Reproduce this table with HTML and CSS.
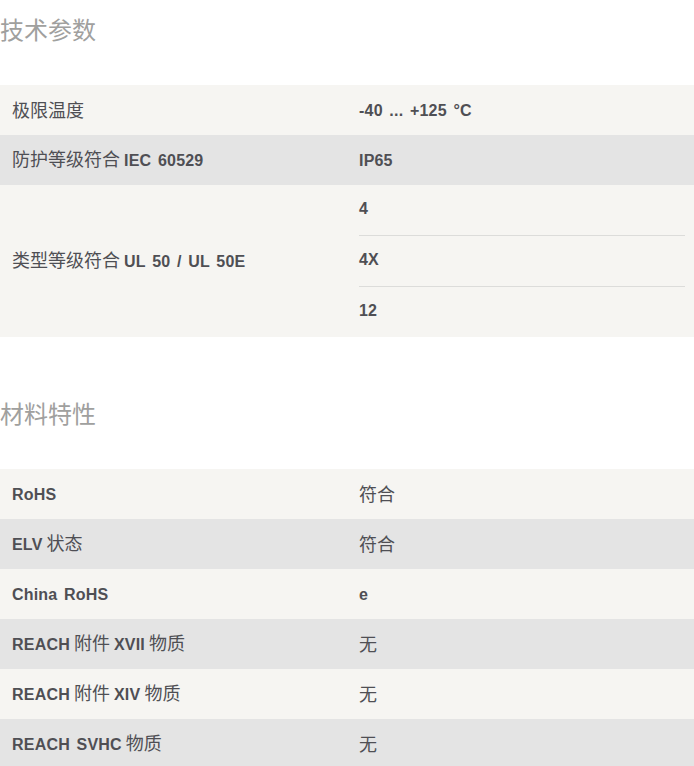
FILE: index.html
```html
<!DOCTYPE html>
<html lang="zh-CN">
<head>
<meta charset="utf-8">
<title>技术参数</title>
<link rel="stylesheet" href="styles.css">
</head>
<body>
<section class="section">
  <h2 class="section-title">技术参数</h2>
  <div class="spec-table">
    <div class="row light">
      <div class="label"><span>极限温度</span></div>
      <div class="value"><span><b>-40 ... +125 °C</b></span></div>
    </div>
    <div class="row dark">
      <div class="label"><span>防护等级符合 <b>IEC 60529</b></span></div>
      <div class="value"><span><b>IP65</b></span></div>
    </div>
    <div class="row light">
      <div class="label"><span>类型等级符合 <b>UL 50 / UL 50E</b></span></div>
      <div class="value multi">
        <div class="sub"><b>4</b></div>
        <div class="sub"><b>4X</b></div>
        <div class="sub"><b>12</b></div>
      </div>
    </div>
  </div>
</section>
<section class="section second">
  <h2 class="section-title">材料特性</h2>
  <div class="spec-table">
    <div class="row light">
      <div class="label"><span><b>RoHS</b></span></div>
      <div class="value"><span>符合</span></div>
    </div>
    <div class="row dark">
      <div class="label"><span><b>ELV</b> 状态</span></div>
      <div class="value"><span>符合</span></div>
    </div>
    <div class="row light">
      <div class="label"><span><b>China RoHS</b></span></div>
      <div class="value"><span><b>e</b></span></div>
    </div>
    <div class="row dark">
      <div class="label"><span><b>REACH</b> 附件 <b>XVII</b> 物质</span></div>
      <div class="value"><span>无</span></div>
    </div>
    <div class="row light">
      <div class="label"><span><b>REACH</b> 附件 <b>XIV</b> 物质</span></div>
      <div class="value"><span>无</span></div>
    </div>
    <div class="row dark">
      <div class="label"><span><b>REACH SVHC</b> 物质</span></div>
      <div class="value"><span>无</span></div>
    </div>
  </div>
</section>
</body>
</html>
```
FILE: styles.css
```css
html, body {
  margin: 0;
  padding: 0;
  background: #ffffff;
}
body {
  font-family: "Noto Sans CJK SC", "Liberation Sans", sans-serif;
  font-size: 18px;
  color: #4f4f54;
}
.section {
  padding-top: 11px;
}
.section.second {
  padding-top: 58px;
}
.section-title {
  margin: 0 0 38px 0;
  font-size: 24px;
  line-height: 36px;
  font-weight: 400;
  color: #a0a09e;
}
.spec-table {
  width: 694px;
}
.row {
  display: grid;
  grid-template-columns: 347px 347px;
  min-height: 50px;
}
.row.light {
  background: #f6f5f2;
}
.row.dark {
  background: #e4e4e4;
}
.label, .value {
  display: flex;
  align-items: center;
  padding-left: 12px;
  padding-bottom: 2px;
  line-height: 20px;
}
.value {
  padding-right: 9px;
}
.value.multi {
  flex-direction: column;
  align-items: stretch;
  padding-bottom: 0;
}
.sub {
  height: 50px;
  display: flex;
  align-items: center;
  padding-bottom: 2px;
  box-sizing: border-box;
}
.sub + .sub {
  border-top: 1px solid #dcdcda;
  height: 51px;
}
b {
  font-family: "Liberation Sans", Arial, sans-serif;
  font-weight: 700;
  font-size: 16px;
  letter-spacing: 0.2px;
  word-spacing: 2px;
}
```
